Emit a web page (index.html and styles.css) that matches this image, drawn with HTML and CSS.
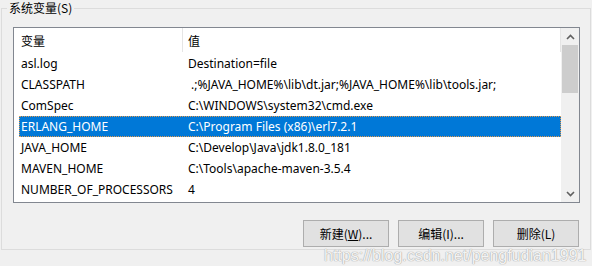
FILE: index.html
```html
<!DOCTYPE html>
<html>
<head>
<meta charset="utf-8">
<link rel="stylesheet" href="styles.css">
</head>
<body>
<fieldset class="group">
  <legend class="group-title">系统变量(S)</legend>
  <div class="listbox">
    <div class="list-content">
      <div class="list-header">
        <div class="hcell hname">变量</div>
        <div class="hcell hvalue">值</div>
      </div>
      <div class="row"><div class="cname">asl.log</div><div class="cvalue">Destination=file</div></div>
      <div class="row"><div class="cname">CLASSPATH</div><div class="cvalue">&nbsp;.;%JAVA_HOME%\lib\dt.jar;%JAVA_HOME%\lib\tools.jar;</div></div>
      <div class="row"><div class="cname">ComSpec</div><div class="cvalue">C:\WINDOWS\system32\cmd.exe</div></div>
      <div class="row selected"><div class="cname">ERLANG_HOME</div><div class="cvalue">C:\Program Files (x86)\erl7.2.1</div></div>
      <div class="row"><div class="cname">JAVA_HOME</div><div class="cvalue">C:\Develop\Java\jdk1.8.0_181</div></div>
      <div class="row"><div class="cname">MAVEN_HOME</div><div class="cvalue">C:\Tools\apache-maven-3.5.4</div></div>
      <div class="row"><div class="cname">NUMBER_OF_PROCESSORS</div><div class="cvalue">4</div></div>
    </div>
    <div class="scrollbar">
      <div class="sb-arrow">
        <svg width="9" height="6" viewBox="0 0 9 6"><path d="M1 5 L4.5 1.5 L8 5" fill="none" stroke="#606060" stroke-width="1.6"/></svg>
      </div>
      <div class="sb-thumb"></div>
      <div class="sb-track"></div>
      <div class="sb-arrow">
        <svg width="9" height="6" viewBox="0 0 9 6"><path d="M1 1 L4.5 4.5 L8 1" fill="none" stroke="#606060" stroke-width="1.6"/></svg>
      </div>
    </div>
  </div>
  <div class="buttons">
    <button class="btn">新建(<u>W</u>)...</button>
    <button class="btn">编辑(I)...</button>
    <button class="btn">删除(L)</button>
  </div>
  <div class="watermark">https://blog.csdn.net/pengfudian1991</div>
</fieldset>
</body>
</html>
```
FILE: styles.css
```css
html, body {
  margin: 0;
  padding: 0;
  background: #f0f0f0;
  width: 592px;
  height: 266px;
  overflow: hidden;
  font-family: "Noto Sans", "Noto Sans CJK SC", sans-serif;
  font-size: 12px;
  color: #000;
}
.group {
  position: relative;
  margin: 0 1px;
  padding: 0;
  width: 588px;
  height: 248px;
  border: 1px solid #dcdcdc;
  box-sizing: content-box;
}
.group-title {
  margin-left: 5px;
  padding: 0 2px;
  height: 16px;
  line-height: 16px;
  font-size: 12px;
  font-family: "Noto Sans CJK SC", sans-serif;
}
.btn u { text-decoration: underline; text-underline-offset: 1px; }
.listbox {
  margin: 11px 0 0 11px;
  width: 565px;
  height: 174px;
  border: 1px solid #828790;
  background: #fff;
  display: flex;
}
.list-content {
  width: 542px;
  padding-left: 5px;
}
.list-header {
  display: flex;
  height: 25px;
  align-items: stretch;
}
.hcell {
  display: flex;
  align-items: center;
  font-family: "Noto Sans CJK SC", sans-serif;
  border-right: 1px solid #e5e5e5;
  box-sizing: border-box;
  margin-bottom: 1px;
}
.hname { width: 164px; padding-left: 2px; }
.hvalue { flex: 1; padding-left: 5px; }
.row {
  display: flex;
  height: 21px;
  line-height: 21px;
  white-space: nowrap;
}
.cname { width: 164px; padding-left: 2px; box-sizing: border-box; }
.cvalue { padding-left: 5px; }
.row.selected {
  background: #0078d7;
  color: #fff;
  outline: 1px dotted #e09a50;
  outline-offset: -1px;
}
.scrollbar {
  width: 18px;
  background: #f0f0f0;
  display: flex;
  flex-direction: column;
}
.sb-arrow {
  height: 17px;
  display: flex;
  align-items: center;
  justify-content: center;
}
.sb-thumb {
  height: 48px;
  margin: 0 1px;
  background: #cdcdcd;
}
.sb-track { flex: 1; }
.buttons {
  display: flex;
  justify-content: flex-end;
  gap: 9px;
  margin: 17px 0 0 0;
  width: 577px;
}
.btn {
  width: 86px;
  height: 27px;
  padding: 0;
  background: #e1e1e1;
  border: 1px solid #adadad;
  font-family: "Noto Sans CJK SC", sans-serif;
  font-size: 12px;
  color: #000;
}
.watermark {
  position: absolute;
  left: 322px;
  top: 230px;
  font-family: "Liberation Sans", sans-serif;
  font-size: 16px;
  line-height: 20px;
  color: rgba(255, 255, 255, 0.9);
  text-shadow: 0 0 1px #a0a0a0, 0 0 1px #a0a0a0;
  white-space: nowrap;
  pointer-events: none;
}
```
